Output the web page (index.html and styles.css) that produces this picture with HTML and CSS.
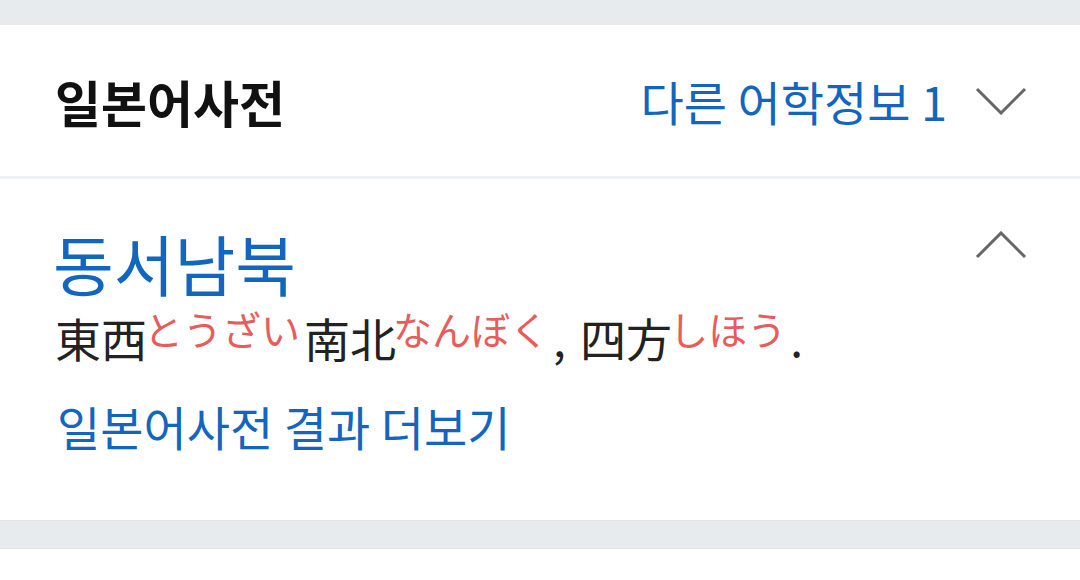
FILE: index.html
```html
<!DOCTYPE html>
<html>
<head>
  <title>일본어사전</title>
  <link rel="stylesheet" href="styles.css">
</head>
<body>
  <div class="gap"></div>
  <section class="card">
    <div class="card-head">
      <h2 class="title">일본어사전</h2>
      <a class="other" href="#">다른 어학정보 1
        <svg class="chev" width="52" height="28" viewBox="0 0 52 28"><path d="M2 2 L26 26 L50 2" fill="none" stroke="#666" stroke-width="3"/></svg>
      </a>
    </div>
    <div class="card-body">
      <div class="entry-top">
        <h3 class="word">동서남북</h3>
        <svg class="chev up" width="52" height="28" viewBox="0 0 52 28"><path d="M2 26 L26 2 L50 26" fill="none" stroke="#666" stroke-width="3"/></svg>
      </div>
      <p class="mean">東西<span class="yomi">とうざい</span>南北<span class="yomi">なんぼく</span>, 四方<span class="yomi">しほう</span>.</p>
      <a class="more" href="#">일본어사전 결과 더보기</a>
    </div>
  </section>
  <div class="gap bottom"></div>
  <section class="card rest"></section>
</body>
</html>
```

FILE: styles.css
```css
body { margin: 0; background: #e8ebee; font-family: "Noto Sans CJK KR", "Noto Sans CJK JP", sans-serif; }
a { text-decoration: none; }
.gap { height: 25px; }
.gap.bottom { height: 29px; border-top: 1px solid #e1e4e7; border-bottom: 1px solid #e1e4e7; box-sizing: border-box; }
.card { background: #fff; }
.card.rest { height: 31px; }
.card-head { height: 151px; display: flex; align-items: center; justify-content: space-between; padding: 0 53px 0 55px; border-bottom: 3px solid #eef0f2; }
.title { margin: 0; font-size: 50px; font-weight: 700; color: #111; }
.other { display: flex; align-items: center; gap: 28px; font-size: 47px; color: #1366bf; }
.chev { display: block; }
.card-body { padding: 50px 53px 56px 53px; height: 235px; }
.entry-top { display: flex; justify-content: space-between; align-items: flex-start; }
.word { margin: 0; font-size: 66px; font-weight: 400; color: #1366bf; line-height: 1; }
.up { margin-top: 2px; }
.mean { margin: 14px 0 0 2px; font-size: 46px; color: #222; line-height: 1.2; word-spacing: 4px; }
.yomi { font-size: 39px; line-height: 1; color: #e85c5c; vertical-align: 12px; margin: 0 4px 0 -3px; }
.more { display: inline-block; margin: 33px 0 0 4px; font-size: 47px; color: #1366bf; line-height: 1.2; }
```
